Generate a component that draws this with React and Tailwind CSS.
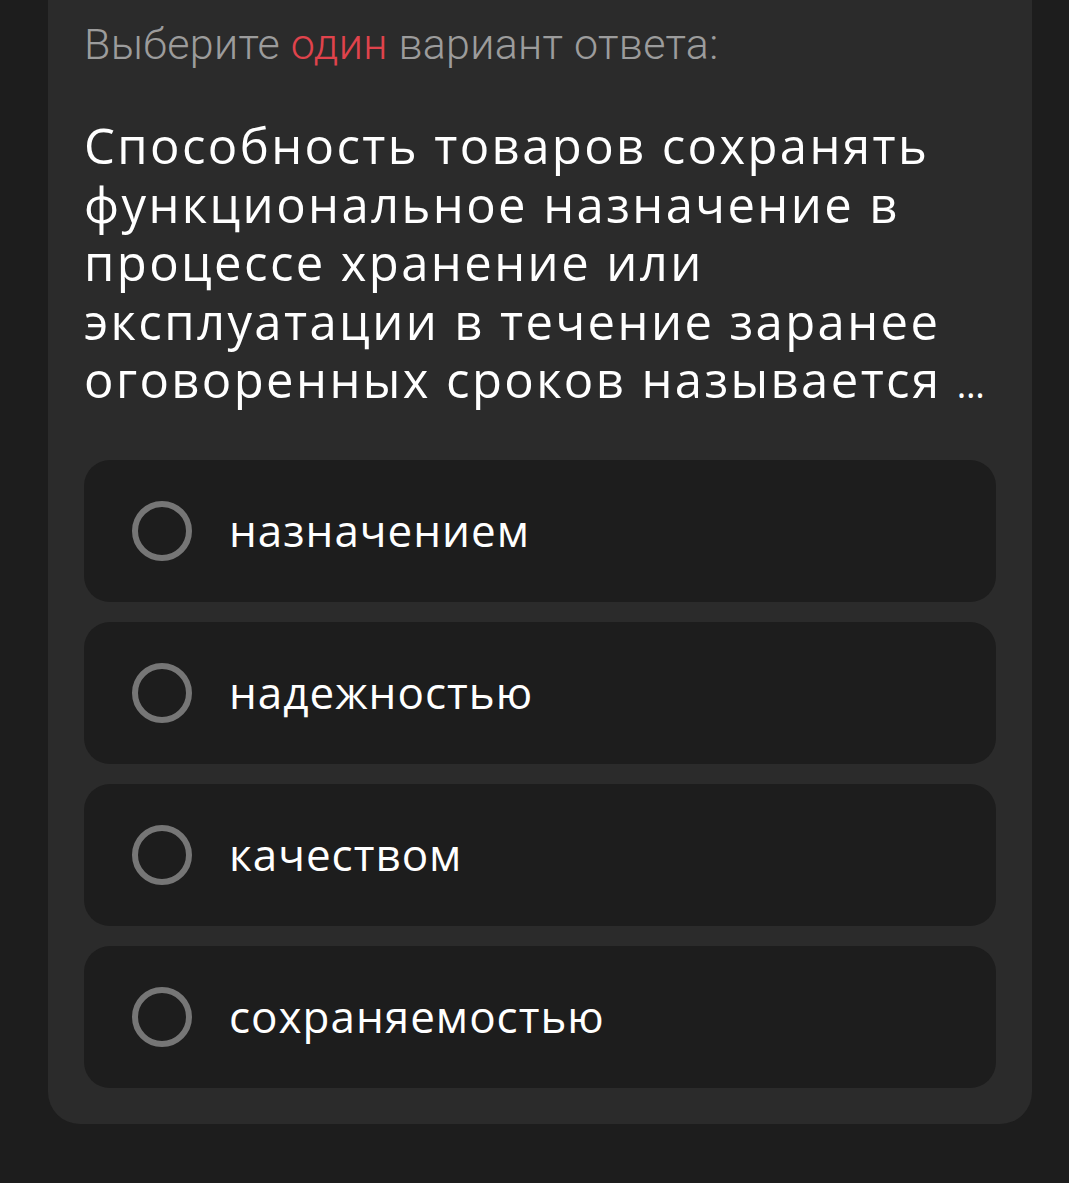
import React from 'react';

const options = ['назначением', 'надежностью', 'качеством', 'сохраняемостью'];

const Radio = () => (
  <div className="w-[60px] h-[60px] rounded-full border-[6px] border-[#767676] shrink-0" />
);

export default function App() {
  return (
    <div className="min-h-[1183px] bg-[#1d1d1d] pb-[59px]">
      <div className="ml-[48px] mr-[37px] bg-[#2b2b2b] rounded-b-[32px] px-[36px] pb-[36px]">
        <p
          className="pt-[18px] text-[43px] font-light text-[#9c9c9c] leading-[52px] tracking-[0.3px]"
          style={{ fontFamily: 'Roboto, sans-serif' }}
        >
          Выберите <span className="text-[#e0434c]">один</span> вариант ответа:
        </p>
        <h1
          className="mt-[46px] text-[49px] text-white leading-[58.5px] font-normal tracking-[2.4px]"
          style={{ fontFamily: '"Open Sans", sans-serif' }}
        >
          Способность товаров сохранять функциональное назначение в процессе хранение или эксплуатации в течение заранее оговоренных сроков называется{'\u00A0'}
          <span className="text-[36px] tracking-normal">…</span>
        </h1>
        <div className="mt-[45px] flex flex-col gap-[20px]">
          {options.map((o) => (
            <div
              key={o}
              className="h-[142px] bg-[#1d1d1d] rounded-[26px] flex items-center pl-[48px] gap-[37px]"
            >
              <Radio />
              <span
                className="text-[44px] text-white leading-none tracking-[1px] pb-[2px]"
                style={{ fontFamily: '"Open Sans", sans-serif' }}
              >
                {o}
              </span>
            </div>
          ))}
        </div>
      </div>
    </div>
  );
}
